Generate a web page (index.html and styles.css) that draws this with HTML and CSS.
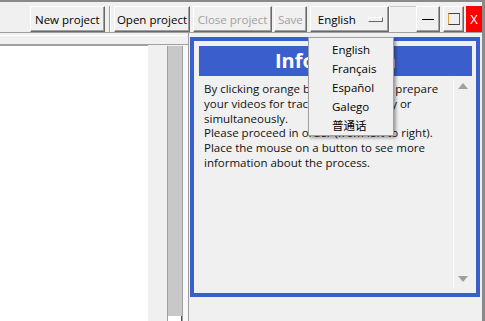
FILE: index.html
```html
<!DOCTYPE html>
<html>
<head>
<meta charset="utf-8">
<link rel="stylesheet" href="styles.css">
</head>
<body>
<div class="window">
  <div class="toolbar">
    <button class="btn w-new">New project</button>
    <span class="sep"></span>
    <button class="btn w-open">Open project</button>
    <button class="btn w-close disabled">Close project</button>
    <button class="btn w-save disabled">Save</button>
    <div class="btn menubtn"><span>English</span><span class="ind"></span></div>
    <div class="spacer"></div>
    <button class="btn wbtn w-min"><span class="minline"></span></button>
    <button class="btn wbtn w-max"><span class="maxbox"></span></button>
    <button class="wbtn w-x">X</button>
  </div>
  <div class="main">
    <div class="left">
      <div class="left-lines"></div>
      <div class="left-body">
        <div class="canvas"></div>
        <div class="gutter"></div>
        <div class="vbar"><div class="vbar-end"></div></div>
        <div class="edge"></div>
      </div>
    </div>
    <div class="right">
      <div class="info">
        <div class="info-head">Information</div>
        <div class="info-body">
          <div class="info-text">By clicking orange buttons, you can prepare your videos for tracking, individually or simultaneously.<br>Please proceed in order (from left to right).<br>Place the mouse on a button to see more information about the process.</div>
          <div class="scroll">
            <span class="arrow up"></span>
            <span class="arrow down"></span>
          </div>
        </div>
      </div>
    </div>
  </div>
  <div class="menu">
    <div class="item">English</div>
    <div class="item">Français</div>
    <div class="item">Español</div>
    <div class="item">Galego</div>
    <div class="item">普通话</div>
  </div>
</div>
</body>
</html>
```
FILE: styles.css
```css
* { box-sizing: border-box; }
html, body { margin: 0; padding: 0; }
body {
  width: 485px;
  height: 321px;
  overflow: hidden;
  background: #f0f0f0;
  font-family: "Open Sans", "Noto Sans CJK SC", sans-serif;
  font-size: 11.5px;
  color: #000;
}
.window {
  position: relative;
  height: 321px;
  border-top: 2px solid #8a8a8a;
  border-right: 3px solid #8a8a8a;
  display: flex;
  flex-direction: column;
}
.toolbar {
  height: 31px;
  display: flex;
  align-items: flex-start;
  padding: 4px 0 0 30px;
  border-bottom: 1px solid #a0a0a0;
}
.btn {
  height: 26px;
  padding: 0;
  margin: 0;
  background: #f0f0f0;
  font: inherit;
  color: #000;
  border: 1px solid;
  border-color: #ffffff #696969 #696969 #ffffff;
  box-shadow: inset -1px -1px 0 #a0a0a0, inset 1px 1px 0 #f0f0f0;
  display: flex;
  align-items: center;
  justify-content: center;
  white-space: nowrap;
}
.disabled { color: #a0a0a0; }
.w-new { width: 75px; }
.sep {
  width: 2px;
  height: 26px;
  margin: 0 3px 0 4px;
  border-left: 1px solid #a0a0a0;
  border-right: 1px solid #ffffff;
}
.w-open { width: 77px; margin-right: 3px; }
.w-close { width: 79px; margin-right: 2px; }
.w-save { width: 33px; margin-right: 3px; }
.menubtn {
  width: 80px;
  justify-content: flex-start;
  padding-left: 7px;
  gap: 12px;
}
.ind {
  width: 15px;
  height: 5px;
  border: 1px solid;
  border-color: #ffffff #696969 #696969 #ffffff;
  background: #f0f0f0;
}
.spacer {
  width: 27px;
  height: 26px;
  border-top: 1px solid #c8c8c8;
  border-left: 1px solid #ffffff;
}
.w-min { width: 24px; margin-right: 3px; }
.w-max { width: 21px; margin-right: 2px; }
.minline { width: 12px; height: 1px; background: #000; }
.maxbox {
  width: 12px;
  height: 12px;
  border: 1px solid #444;
  border-left-color: #e0a040;
  border-right-color: #4060d0;
}
.w-x {
  width: 16px;
  height: 26px;
  padding: 0;
  border: none;
  background: #ff0000;
  color: #fff;
  font: inherit;
  font-size: 13px;
}
.main {
  flex: 1;
  display: flex;
  min-height: 0;
}
.left {
  width: 189px;
  display: flex;
  flex-direction: column;
  border-right: 1px solid #a0a0a0;
}
.left-lines {
  height: 10px;
  border-top: 1px solid #ffffff;
  border-bottom: 1px solid #a0a0a0;
  margin-top: 2px;
}
.left-body {
  flex: 1;
  display: flex;
}
.canvas {
  width: 148px;
  background: #fff;
  border-top: 1px solid #a0a0a0;
}
.gutter { width: 19px; }
.vbar {
  width: 16px;
  margin-top: 1px;
  background: #c8c8c8;
  border-left: 1px solid #a0a0a0;
  border-right: 1px solid #a0a0a0;
  display: flex;
  flex-direction: column;
  justify-content: flex-end;
}
.vbar-end {
  height: 5px;
  background: #fff;
  border-right: 1px solid #505050;
}
.edge { width: 5px; background: #f8f8f8; }
.right {
  flex: 1;
  padding: 4px 0 24px 1px;
}
.info {
  height: 100%;
  width: 290px;
  border: 4px solid #3a5fcd;
  padding: 5px 4px 5px 5px;
  display: flex;
  flex-direction: column;
}
.info-head {
  height: 30px;
  background: #3a5fcd;
  color: #fff;
  font-weight: bold;
  font-size: 20px;
  line-height: 30px;
  text-align: center;
}
.info-body {
  flex: 1;
  display: flex;
  margin-top: 3px;
  min-height: 0;
}
.info-text {
  flex: 1;
  padding: 3px 4px 0 5px;
  line-height: 14.8px;
  color: #111;
}
.scroll {
  width: 19px;
  border-left: 1px solid #fff;
  display: flex;
  flex-direction: column;
  justify-content: space-between;
  align-items: center;
  padding: 4px 0 6px;
}
.arrow {
  width: 0;
  height: 0;
  border-left: 5px solid transparent;
  border-right: 5px solid transparent;
}
.arrow.up { border-bottom: 6px solid #a0a0a0; }
.arrow.down { border-top: 6px solid #a0a0a0; }
.menu {
  position: absolute;
  left: 308px;
  top: 35px;
  width: 86px;
  padding: 2px 0 0 23px;
  background: #f0f0f0;
  border: 1px solid #a0a0a0;
  box-shadow: 2px 2px 3px rgba(0,0,0,0.35);
}
.item {
  height: 19px;
  line-height: 19px;
}
```
